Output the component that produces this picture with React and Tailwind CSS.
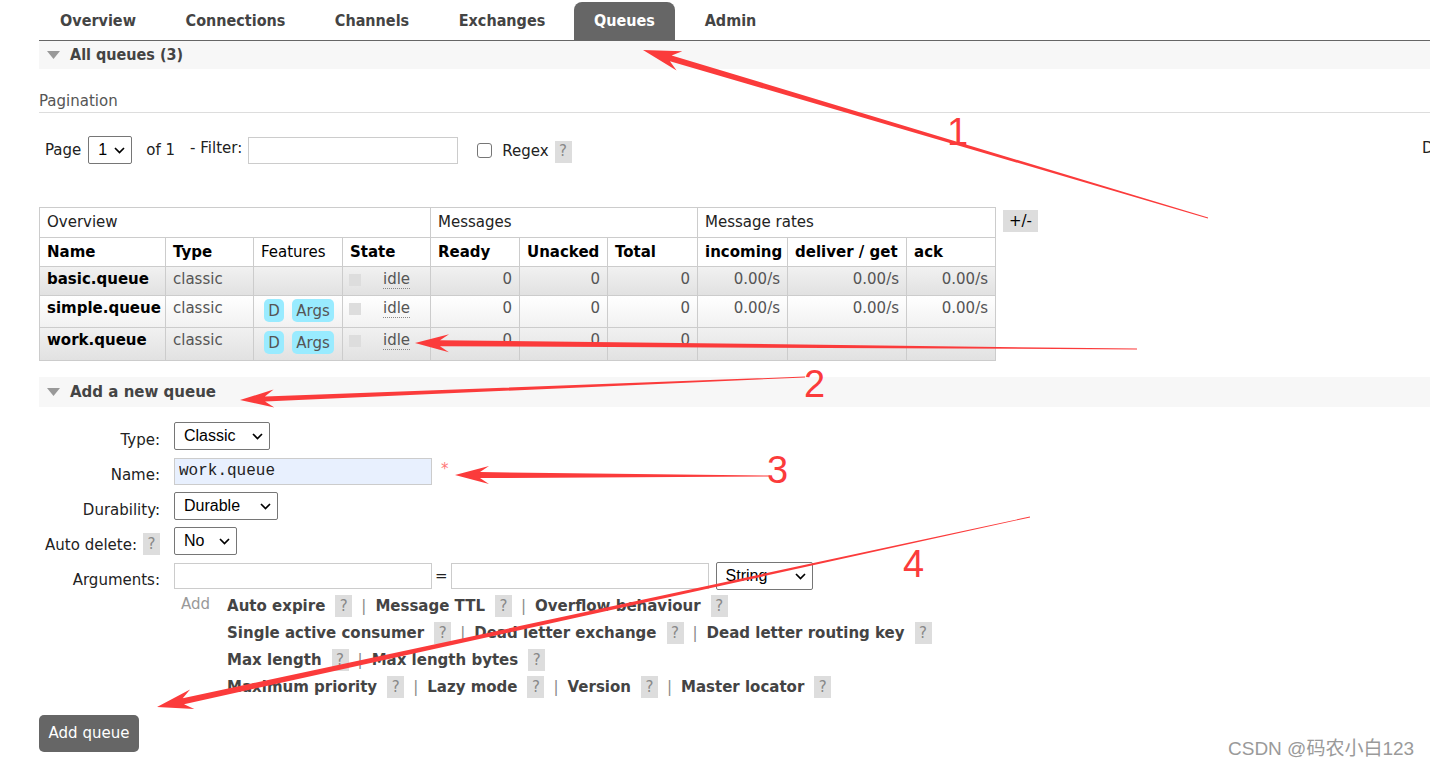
import React from 'react';

const ui = { fontFamily: "'DejaVu Sans', Verdana, sans-serif" };
const tabFont = { fontFamily: "'DejaVu Sans Condensed', 'Liberation Sans Narrow', sans-serif" };
const ctl = { fontFamily: "'Liberation Sans', Arial, sans-serif" };

const tabs = [
  { label: 'Overview', w: 'w-[118px]' },
  { label: 'Connections', w: 'w-[143px]' },
  { label: 'Channels', w: 'w-[116px]' },
  { label: 'Exchanges', w: 'w-[130px]' },
  { label: 'Queues', w: 'w-[101px]', active: true },
  { label: 'Admin', w: 'w-[97px]' },
];

const queues = [
  { name: 'basic.queue', features: false, h: 'h-[29px]', odd: true, rates: true },
  { name: 'simple.queue', features: true, h: 'h-[32px]', odd: false, rates: true },
  { name: 'work.queue', features: true, h: 'h-[33px]', odd: true, rates: false },
];

const helpLines = [
  ['Auto expire', 'Message TTL', 'Overflow behaviour'],
  ['Single active consumer', 'Dead letter exchange', 'Dead letter routing key'],
  ['Max length', 'Max length bytes'],
  ['Maximum priority', 'Lazy mode', 'Version', 'Master locator'],
];

function Help({ className = '' }) {
  return (
    <span className={`inline-flex h-[22px] w-[17px] items-center justify-center bg-[#ddd] text-[15px] font-normal text-[#888] ${className}`}>
      ?
    </span>
  );
}

function Select({ w, value, options }) {
  return (
    <div className="relative">
      <select
        defaultValue={value}
        style={ctl}
        className={`${w} h-[28px] appearance-none rounded-[2px] border border-[#767676] bg-white pl-[9px] text-[16px] text-black`}
      >
        {options.map((o) => (
          <option key={o}>{o}</option>
        ))}
      </select>
      <svg className="pointer-events-none absolute right-[7px] top-[11px]" width="11" height="7" viewBox="0 0 11 7">
        <path d="M1 1l4.5 4.5L10 1" fill="none" stroke="#000" strokeWidth="1.7" />
      </svg>
    </div>
  );
}

function Arrow({ x1, y1, x2, y2, w = 5, head = 34, barb = 9 }) {
  const dx = x2 - x1;
  const dy = y2 - y1;
  const len = Math.hypot(dx, dy);
  const ux = dx / len;
  const uy = dy / len;
  const nx = -uy;
  const ny = ux;
  const sx = x2 - ux * (head - 9);
  const sy = y2 - uy * (head - 9);
  const bx = x2 - ux * head;
  const by = y2 - uy * head;
  const pts = [
    [x1 + nx * 0.4, y1 + ny * 0.4],
    [sx + (nx * w) / 2, sy + (ny * w) / 2],
    [bx + nx * barb, by + ny * barb],
    [x2, y2],
    [bx - nx * barb, by - ny * barb],
    [sx - (nx * w) / 2, sy - (ny * w) / 2],
    [x1 - nx * 0.4, y1 - ny * 0.4],
  ];
  return <polygon points={pts.map((p) => p.join(',')).join(' ')} fill="#fb3b3b" />;
}

function Annotations() {
  return (
    <svg className="pointer-events-none absolute left-0 top-0" width="1430" height="767">
      <Arrow x1={1208} y1={218} x2={643} y2={50} w={6} head={38} barb={10} />
      <Arrow x1={1137} y1={349} x2={415} y2={343} w={6} />
      <Arrow x1={805} y1={377} x2={240} y2={400} w={5} />
      <Arrow x1={770} y1={476} x2={455} y2={475} w={6} />
      <Arrow x1={1030} y1={517} x2={157} y2={707} w={6} head={36} barb={10} />
      <g fill="#fb3b3b" fontFamily="'Liberation Sans', Arial, sans-serif" fontSize="38">
        <text x="947" y="145">1</text>
        <text x="804" y="397">2</text>
        <text x="767" y="483">3</text>
        <text x="903" y="577">4</text>
      </g>
    </svg>
  );
}

function QueueTable() {
  const th = 'border border-[#ccc] px-[7px] text-left align-middle';
  const cell = 'border border-[#ccc] pt-[3px] align-top leading-[18px]';
  const td = `${cell} px-[7px]`;
  return (
    <table className="w-[956px] table-fixed border-collapse text-[15px]" style={ui}>
      <colgroup>
        <col className="w-[126px]" />
        <col className="w-[88px]" />
        <col className="w-[89px]" />
        <col className="w-[88px]" />
        <col className="w-[89px]" />
        <col className="w-[88px]" />
        <col className="w-[90px]" />
        <col className="w-[90px]" />
        <col className="w-[119px]" />
        <col className="w-[89px]" />
      </colgroup>
      <thead>
        <tr className="h-[30px] text-[#222]">
          <th colSpan={4} className={`${th} font-normal`}>Overview</th>
          <th colSpan={3} className={`${th} font-normal`}>Messages</th>
          <th colSpan={3} className={`${th} font-normal`}>Message rates</th>
        </tr>
        <tr className="h-[29px] text-black">
          <th className={`${th} font-bold`}>Name</th>
          <th className={`${th} font-bold`}>Type</th>
          <th className={`${th} font-normal`}>Features</th>
          <th className={`${th} font-bold`}>State</th>
          <th className={`${th} font-bold`}>Ready</th>
          <th className={`${th} font-bold`}>Unacked</th>
          <th className={`${th} font-bold`}>Total</th>
          <th className={`${th} font-bold`}>incoming</th>
          <th className={`${th} font-bold`}>deliver / get</th>
          <th className={`${th} font-bold`}>ack</th>
        </tr>
      </thead>
      <tbody>
        {queues.map((q) => (
          <tr
            key={q.name}
            className={`${q.h} bg-linear-to-b ${q.odd ? 'from-[#f1f1f1] to-[#e1e1e1]' : 'from-[#ffffff] to-[#f1f1f1]'} text-[#555]`}
          >
            <td className={`${td} font-bold text-black`}>{q.name}</td>
            <td className={td}>classic</td>
            <td className={`${cell} pl-[10px]`}>
              {q.features && (
                <div className="flex gap-[8px]">
                  <span className="inline-flex h-[23px] w-[20px] items-center justify-center rounded-[5px] bg-[#99ebff]">D</span>
                  <span className="inline-flex h-[23px] w-[42px] items-center justify-center rounded-[5px] bg-[#99ebff]">Args</span>
                </div>
              )}
            </td>
            <td className={cell}>
              <div className="flex items-start">
                <span className="ml-[6px] mt-[4px] h-[12px] w-[12px] bg-[#ddd]" />
                <span className="ml-[22px] border-b border-dotted border-[#888] leading-[18px]">idle</span>
              </div>
            </td>
            <td className={`${td} text-right`}>0</td>
            <td className={`${td} text-right`}>0</td>
            <td className={`${td} text-right`}>0</td>
            <td className={`${td} text-right`}>{q.rates ? '0.00/s' : ''}</td>
            <td className={`${td} text-right`}>{q.rates ? '0.00/s' : ''}</td>
            <td className={`${td} text-right`}>{q.rates ? '0.00/s' : ''}</td>
          </tr>
        ))}
      </tbody>
    </table>
  );
}

function FormRow({ label, children, help }) {
  return (
    <div className="flex h-[28px] items-center">
      <div className="flex w-[121px] items-center justify-end gap-[6px] pt-[8px] text-[15px] text-[#222]">
        <span>{label}</span>
        {help && <Help className="-mt-[2px]" />}
      </div>
      <div className="ml-[14px] flex items-center">{children}</div>
    </div>
  );
}

export default function App() {
  return (
    <div className="relative h-[767px] w-[1430px] overflow-hidden bg-white" style={ui}>
      <div className="pl-[39px]">
        {/* tabs */}
        <nav className="flex h-[41px] items-end gap-[7px] border-b border-[#666]" style={tabFont}>
          {tabs.map((t) => (
            <div
              key={t.label}
              className={`${t.w} flex h-[38px] items-center justify-center text-[16px] font-bold ${
                t.active ? 'rounded-t-[8px] bg-[#666] text-white' : 'text-[#444]'
              }`}
            >
              {t.label}
            </div>
          ))}
        </nav>

        <div className="flex h-[28px] items-center bg-[#f7f7f7]">
          <svg className="ml-[8px]" width="13" height="8" viewBox="0 0 13 8">
            <path d="M0 0h13L6.5 8z" fill="#999" />
          </svg>
          <span className="ml-[10px] text-[16px] font-bold text-[#444]" style={tabFont}>
            All queues (3)
          </span>
        </div>

        <div className="mt-[21px] h-[23px] border-b border-[#ddd] text-[15px] leading-[22px] text-[#555]">Pagination</div>

        <div className="mt-[23px] flex h-[28px] items-center text-[15px] text-[#222]">
          <span className="ml-[6px]">Page</span>
          <div className="ml-[7px]">
            <Select w="w-[44px]" value="1" options={['1']} />
          </div>
          <span className="ml-[14px]">of 1</span>
          <span className="ml-[15px] -mt-[3px]">- Filter:</span>
          <input className="ml-[6px] h-[27px] w-[210px] border border-[#ccc] bg-white" />
          <input type="checkbox" className="ml-[19px] h-[15px] w-[15px] appearance-none rounded-[3px] border border-[#767676] bg-white" />
          <span className="ml-[10px] mt-[3px]">Regex</span>
          <Help className="ml-[6px] mt-[3px] text-[#555]" />
          <div className="ml-auto w-[8px] self-start whitespace-nowrap pt-[1px] text-[15px] text-[#222]">
            Displaying 3 items , page size up to:
          </div>
        </div>

        <div className="mt-[43px] flex items-start">
          <QueueTable />
          <span className="ml-[7px] mt-[3px] flex h-[22px] w-[35px] items-center justify-center bg-[#ddd] text-[15px] text-black">
            +/-
          </span>
        </div>

        <div className="mt-[16px] flex h-[30px] items-center bg-[#f7f7f7]">
          <svg className="ml-[8px]" width="13" height="8" viewBox="0 0 13 8">
            <path d="M0 0h13L6.5 8z" fill="#999" />
          </svg>
          <span className="ml-[10px] text-[15px] font-bold text-[#444]">Add a new queue</span>
        </div>

        <form className="mt-[15px] flex flex-col gap-[7px]" onSubmit={(e) => e.preventDefault()}>
          <FormRow label="Type:">
            <Select w="w-[96px]" value="Classic" options={['Classic', 'Quorum', 'Stream']} />
          </FormRow>
          <FormRow label="Name:">
            <input
              defaultValue="work.queue"
              className="h-[27px] w-[258px] border border-[#ccc] bg-[#e8f0fe] px-[4px] text-[16px] text-[#222]"
              style={{ fontFamily: "'Liberation Mono', 'Courier New', monospace" }}
            />
            <span className="ml-[9px] -mt-[4px] text-[15px] text-[#f77]">*</span>
          </FormRow>
          <FormRow label="Durability:">
            <Select w="w-[104px]" value="Durable" options={['Durable', 'Transient']} />
          </FormRow>
          <FormRow label="Auto delete:" help>
            <Select w="w-[63px]" value="No" options={['No', 'Yes']} />
          </FormRow>
          <FormRow label="Arguments:">
            <input className="h-[26px] w-[258px] border border-[#ccc] bg-white" />
            <span className="mx-[3px] text-[15px] text-[#222]">=</span>
            <input className="h-[26px] w-[258px] border border-[#ccc] bg-white" />
            <div className="ml-[7px]">
              <Select w="w-[97px]" value="String" options={['String', 'Number', 'Boolean', 'List']} />
            </div>
          </FormRow>

          <div className="-mt-[2px] ml-[135px] flex items-start">
            <span className="ml-[7px] text-[15px] leading-[18px] text-[#999]">Add</span>
            <div className="ml-[17px] flex flex-col gap-[5px]">
              {helpLines.map((line, i) => (
                <div key={i} className="flex h-[22px] items-center text-[15px] font-bold text-[#444]">
                  {line.map((item, j) => (
                    <React.Fragment key={item}>
                      {j > 0 && <span className="mx-[9px] font-normal text-[#888]">|</span>}
                      <span>{item}</span>
                      <Help className="ml-[10px]" />
                    </React.Fragment>
                  ))}
                </div>
              ))}
            </div>
          </div>

          <button
            type="submit"
            className="mt-[10px] h-[37px] w-[100px] rounded-[5px] bg-[#666] text-[15px] text-white"
          >
            Add queue
          </button>
        </form>
      </div>

      <div
        className="absolute left-[1228px] top-[735px] text-[19px] text-[#9a9a9a]"
        style={{ fontFamily: "'Liberation Sans', 'Noto Sans CJK SC', sans-serif" }}
      >
        CSDN @码农小白123
      </div>

      <Annotations />
    </div>
  );
}
